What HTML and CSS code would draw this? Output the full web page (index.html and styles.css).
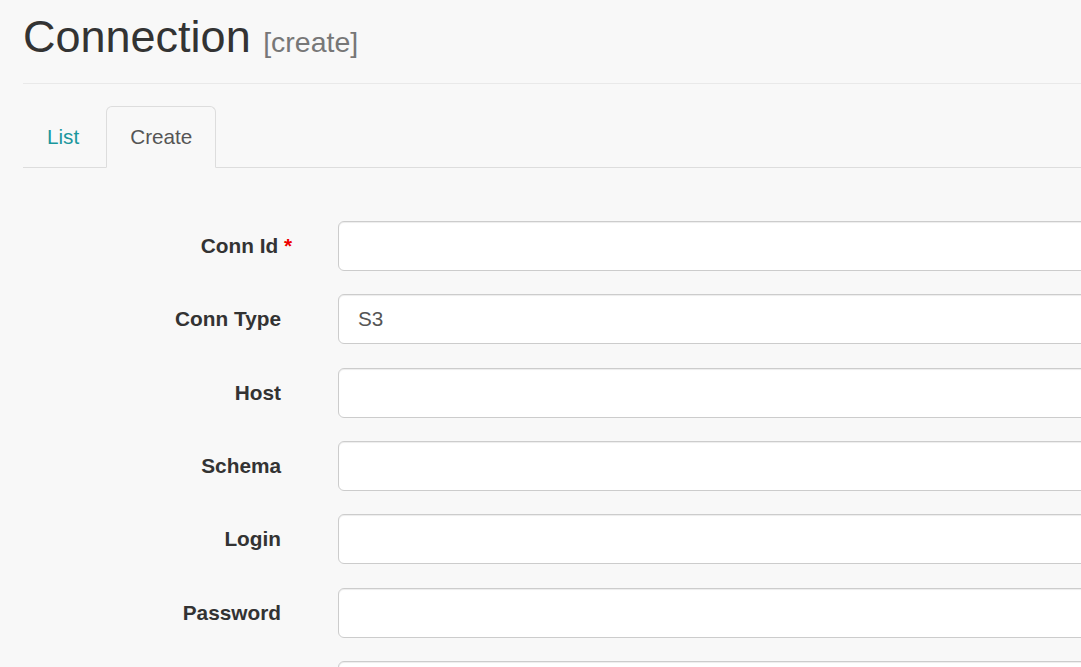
FILE: index.html
```html
<!DOCTYPE html>
<html>
<head>
<meta charset="utf-8">
<title>Connection - create</title>
<link rel="stylesheet" href="styles.css">
</head>
<body>
<div class="page">
  <div class="page-header">
    <h1 class="title">Connection <small class="subtitle">[create]</small></h1>
  </div>
  <ul class="tabs">
    <li class="tab"><a class="tab-link" href="#">List</a></li>
    <li class="tab tab-active"><a class="tab-link" href="#">Create</a></li>
  </ul>
  <form class="form">
    <label class="label" for="conn_id">Conn Id <span class="required">*</span></label>
    <input class="input" id="conn_id" type="text">
    <label class="label" for="conn_type">Conn Type</label>
    <input class="input" id="conn_type" type="text" value="S3">
    <label class="label" for="host">Host</label>
    <input class="input" id="host" type="text">
    <label class="label" for="schema">Schema</label>
    <input class="input" id="schema" type="text">
    <label class="label" for="login">Login</label>
    <input class="input" id="login" type="text">
    <label class="label" for="password">Password</label>
    <input class="input" id="password" type="password">
    <label class="label" for="port">Port</label>
    <input class="input" id="port" type="text">
  </form>
</div>
</body>
</html>
```

FILE: styles.css
```css
html, body {
  margin: 0;
  padding: 0;
  background: #f8f8f8;
  overflow: hidden;
}
body {
  font-family: "Liberation Sans", Arial, Helvetica, sans-serif;
  color: #333;
  font-size: 20.7px;
}
.page {
  width: 1160px;
  padding-left: 23px;
}
.page-header {
  padding-top: 11px;
  padding-bottom: 15px;
  border-bottom: 1px solid #e9e9e9;
}
.title {
  margin: 0;
  font-size: 45px;
  line-height: 52px;
  font-weight: normal;
  color: #333;
}
.subtitle {
  font-size: 28.5px;
  color: #777;
}
.tabs {
  list-style: none;
  margin: 22px 0 0 0;
  padding: 0;
  display: flex;
  border-bottom: 1px solid #ddd;
}
.tab {
  margin-right: 3px;
  margin-bottom: -1px;
}
.tab-link {
  display: block;
  padding: 15px 23px 16px;
  line-height: 29px;
  border: 1px solid transparent;
  border-radius: 6px 6px 0 0;
  color: #1a979d;
  text-decoration: none;
}
.tab-active .tab-link {
  color: #555;
  background: #f8f8f8;
  border-color: #ddd #ddd transparent #ddd;
}
.form {
  margin-top: 53px;
  display: grid;
  grid-template-columns: 258px 1fr;
  column-gap: 57px;
  row-gap: 23.33px;
  align-items: center;
}
.label {
  text-align: right;
  font-weight: bold;
  font-size: 20.8px;
  color: #333;
}
.required {
  color: #e00;
  margin-right: -11px;
}
.input {
  box-sizing: border-box;
  height: 50px;
  margin: 0;
  padding: 0 19px;
  font-family: "Liberation Sans", Arial, Helvetica, sans-serif;
  font-size: 20.7px;
  color: #555;
  background: #fff;
  border: 1px solid #ccc;
  border-radius: 6px;
  box-shadow: inset 0 1px 1px rgba(0, 0, 0, 0.075);
  outline: none;
}
```
